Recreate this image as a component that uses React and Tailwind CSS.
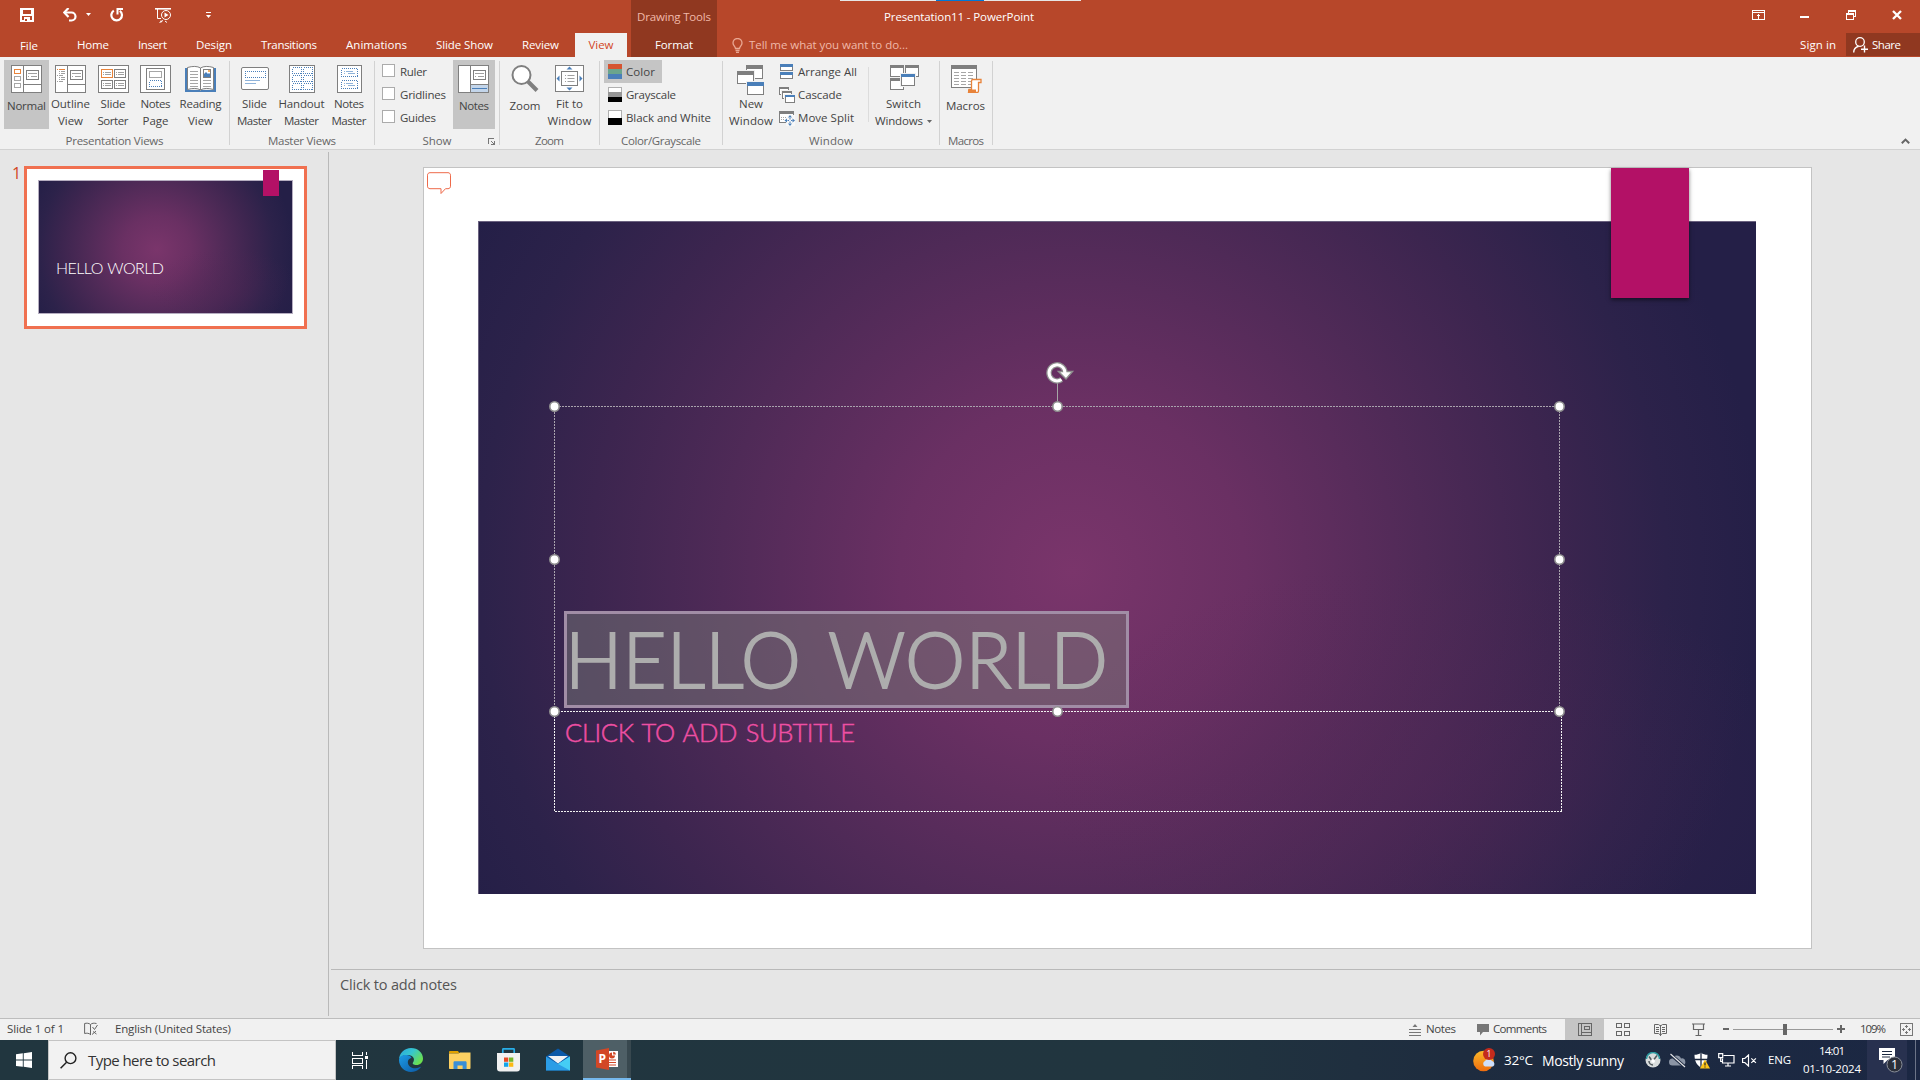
import React, { useLayoutEffect, useRef, useState } from "react";

const UI = "font-['Open_Sans','Noto_Sans',sans-serif]";
const G = "#7f7f7f";
const B = "#4a7fb9";

/* One line of text tracked so that it fills the width w. */
function T({ w, className = "", children }) {
  const ref = useRef(null);
  const [ls, setLs] = useState(0);
  useLayoutEffect(() => {
    const n = children.length;
    const natural = ref.current.getBoundingClientRect().width - ls * n;
    if (n > 1) setLs((w - natural) / (n - 1));
  }, []);
  return (
    <span className={"block shrink-0 whitespace-nowrap " + className} style={{ width: w }}>
      <span ref={ref} className="inline-block" style={{ letterSpacing: ls }}>
        {children}
      </span>
    </span>
  );
}

function Svg({ w, h, children, crisp = true, className = "" }) {
  return (
    <svg
      width={w}
      height={h}
      viewBox={`0 0 ${w} ${h}`}
      fill="none"
      className={"block shrink-0 " + className}
      shapeRendering={crisp ? "crispEdges" : "auto"}
    >
      {children}
    </svg>
  );
}

const R = ({ x, y, w, h, s = G, f = "#fff", ...p }) => (
  <rect x={x + 0.5} y={y + 0.5} width={w - 1} height={h - 1} stroke={s} fill={f} {...p} />
);
const F = ({ x, y, w, h, f = G }) => <rect x={x} y={y} width={w} height={h} fill={f} />;

const MiniSlide = ({ x, y }) => (
  <g>
    <R x={x} y={y} w={13} h={10} />
    <F x={x + 2} y={y + 3} w={9} h={1} f="#a0a0a0" />
    <F x={x + 2} y={y + 6} w={1} h={1} f="#a0a0a0" />
    <F x={x + 5} y={y + 6} w={6} h={1} f="#a0a0a0" />
  </g>
);

const NormalIcon = () => (
  <Svg w={31} h={28}>
    <R x={0} y={0} w={31} h={28} />
    <F x={12} y={0} w={1} h={28} />
    <F x={13} y={19} w={18} h={1} />
    <R x={3} y={4} w={7} h={5} s="#e8833a" />
    <R x={3} y={11} w={7} h={5} s="#a6a6a6" />
    <R x={3} y={18} w={7} h={5} s="#a6a6a6" />
    <MiniSlide x={15} y={5} />
  </Svg>
);
const OutlineIcon = () => (
  <Svg w={31} h={28}>
    <R x={0} y={0} w={31} h={28} />
    <F x={12} y={0} w={1} h={28} />
    <F x={13} y={19} w={18} h={1} />
    <F x={2} y={4} w={1} h={1} f="#e8833a" />
    <F x={4} y={4} w={6} h={1} f="#e8833a" />
    {[6, 8, 10, 12, 14, 16].map((y, i) => (
      <g key={y}>
        <F x={i % 3 === 2 ? 2 : 4} y={y} w={1} h={1} f="#a0a0a0" />
        <F x={i % 3 === 2 ? 4 : 6} y={y} w={4} h={1} f="#a0a0a0" />
      </g>
    ))}
    <MiniSlide x={15} y={5} />
  </Svg>
);
const SorterIcon = () => (
  <Svg w={31} h={28}>
    <R x={0} y={0} w={31} h={28} />
    {[[3, 4], [16, 4], [3, 15], [16, 15]].map(([x, y], i) => (
      <g key={i}>
        <R x={x} y={y} w={12} h={9} s={i ? G : "#e8833a"} />
        <F x={x + 2} y={y + 3} w={1} h={1} f="#a0a0a0" />
        <F x={x + 4} y={y + 3} w={6} h={1} f="#a0a0a0" />
        <F x={x + 2} y={y + 5} w={1} h={1} f="#a0a0a0" />
        <F x={x + 4} y={y + 5} w={6} h={1} f="#a0a0a0" />
      </g>
    ))}
  </Svg>
);
const NotesPageIcon = () => (
  <Svg w={31} h={28}>
    <R x={0} y={0} w={31} h={28} />
    <R x={6} y={3} w={19} h={22} />
    <R x={9} y={6} w={13} h={7} s="#a6a6a6" />
    <R x={9} y={15} w={13} h={7} s={B} strokeDasharray="1 1" />
  </Svg>
);
const ReadingIcon = () => (
  <Svg w={31} h={28} crisp={false}>
    <path d="M0 3h3v22h12l.5 1 .5-1h12V3h3v24H0z" fill={B} />
    <path d="M2.500 2.500c5-1.500 10-1.500 13 .5v22c-3-2-8-2-13-.5z" fill="#fff" stroke={G} />
    <path d="M28.500 2.500c-5-1.500-10-1.500-13 .5v22c3-2 8-2 13-.5z" fill="#fff" stroke={G} />
    <path d="M5 6.500h8M5 9.500h8M5 12.500h8M5 15.500h8M5 18.500h8M18 15.500h8M18 18.500h8M18 21.500h8M5 21.500h8" stroke="#a6a6a6" />
    <rect x="18.500" y="4.500" width="7" height="8" fill="#fff" stroke={G} />
    <path d="M19 12V9l2-2 2 2 1-1 1 1v3z" fill={B} />
    <rect x="23" y="5" width="2" height="2" fill="#f4b266" />
  </Svg>
);
const SlideMasterIcon = () => (
  <Svg w={28} h={28} crisp={false}>
    <rect x=".5" y="2.500" width="27" height="22" rx="1.500" fill="#fff" stroke={G} />
    <path d="M4 6.500h20M4 12.500h20M4.500 6v7M24.500 6v7" stroke={B} strokeDasharray="1 1" />
    <path d="M4 15.500h15M4 18.500h11" stroke="#8fb3d9" />
  </Svg>
);
const HandoutIcon = () => (
  <Svg w={26} h={28}>
    <R x={0} y={0} w={26} h={28} />
    {[2, 10, 18].map((y) =>
      [3, 14].map((x) => (
        <R key={x + "-" + y} x={x} y={y} w={10} h={7} s={B} strokeDasharray="1 1" />
      ))
    )}
  </Svg>
);
const NotesMasterIcon = () => (
  <Svg w={25} h={28}>
    <R x={0} y={0} w={25} h={28} />
    {[3, 15].map((y) => (
      <g key={y}>
        <R x={4} y={y} w={17} h={9} s={B} strokeDasharray="1 1" />
        <F x={7} y={y + 3} w={1} h={1} f="#8fb3d9" />
        <F x={9} y={y + 3} w={7} h={1} f="#8fb3d9" />
        <F x={7} y={y + 5} w={1} h={1} f="#8fb3d9" />
        <F x={11} y={y + 5} w={7} h={1} f="#8fb3d9" />
      </g>
    ))}
  </Svg>
);
const NotesIcon = () => (
  <Svg w={31} h={28}>
    <R x={0} y={0} w={31} h={28} />
    <F x={12} y={0} w={1} h={28} />
    <F x={13} y={19} w={18} h={1} />
    <F x={13} y={20} w={17} h={7} f="#c3d5ea" />
    <F x={14} y={23} w={15} h={1} f={B} />
    <MiniSlide x={15} y={5} />
  </Svg>
);
const ZoomIcon = () => (
  <Svg w={28} h={28} crisp={false}>
    <circle cx="10.500" cy="10" r="9" stroke={G} strokeWidth="2" fill="#fff" />
    <path d="M17 16.500L26 25.500" stroke={G} strokeWidth="4" />
  </Svg>
);
const FitIcon = () => (
  <Svg w={29} h={28} crisp={false}>
    <R x={0} y={0} w={29} h={27} />
    <R x={6} y={6} w={17} h={15} />
    <path d="M10 10.500h1M12.500 10.500h7M10 13.500h1M12.500 13.500h7M10 16.500h1M12.500 16.500h7" stroke="#a0a0a0" />
    <path d="M14.500 1.500l3 3h-6zM14.500 25.500l3-3h-6zM1.500 13.500l3-3v6zM27.500 13.500l-3-3v6z" fill={B} />
  </Svg>
);
const Win = ({ x, y, w, h, c = G, t = 4 }) => (
  <g>
    <rect x={x - 1} y={y - 1} width={w + 2} height={h + 2} fill="#f1f1f1" />
    <R x={x} y={y} w={w} h={h} s={c} />
    <F x={x} y={y} w={w} h={t} f={c} />
  </g>
);
const NewWindowIcon = () => (
  <Svg w={28} h={30}>
    <Win x={9} y={0} w={17} h={14} />
    <Win x={0} y={6} w={17} h={13} />
    <Win x={10} y={17} w={17} h={13} />
    <F x={10} y={17} w={17} h={4} f={B} />
  </Svg>
);
const SwitchIcon = () => (
  <Svg w={30} h={28}>
    <Win x={1} y={0} w={14} h={12} t={3} />
    <Win x={16} y={0} w={14} h={12} t={3} />
    <Win x={1} y={13} w={14} h={12} t={3} />
    <Win x={12} y={9} w={14} h={12} t={3} />
    <F x={12} y={9} w={14} h={3} f={B} />
  </Svg>
);
const MacrosIcon = () => (
  <Svg w={32} h={28} crisp={false}>
    <g shapeRendering="crispEdges">
      <R x={1} y={0} w={26} h={23} />
      <F x={1} y={0} w={26} h={4} />
      {[7, 10, 13, 16, 19].map((y) =>
        [4, 11, 18].map((x) => <F key={x + "_" + y} x={x} y={y} w={5} h={1} f="#a6a6a6" />)
      )}
    </g>
    <path d="M19 24.500h2.500V16c0-1 .5-1.500 1.500-1.500h8v3h-2.500V26c0 1-.5 1.500-1.500 1.500h-8.500z" fill="#fff" stroke="#e8833a" strokeWidth="1.300" />
    <path d="M18 24.500h8v3h-8z" fill="#e8833a" />
  </Svg>
);
const Bars = ({ c }) => (
  <Svg w={14} h={15}>
    <F x={0} y={0} w={14} h={15} f="#b0b0b0" />
    {c.map((f, i) => (
      <F key={i} x={f === "#fff" ? 1 : 0} y={i * (15 / c.length) + (f === "#fff" ? 1 : 0)} w={f === "#fff" ? 12 : 14} h={15 / c.length} f={f} />
    ))}
  </Svg>
);

/* Tall ribbon button: icon above one or two label lines. */
function Big({ icon, lines, widths, width, active, arrow }) {
  return (
    <div className={"flex h-[69px] shrink-0 flex-col items-center pt-[5px] " + (active ? "bg-[#c5c5c5]" : "")} style={{ width }}>
      <div className="flex h-[33px] items-start">{icon}</div>
      {lines.map((l, i) => (
        <div key={l} className={"flex h-4 items-center gap-1 " + (i ? "mt-px" : "")}>
          <T w={widths[i]} className="leading-4">{l}</T>
          {arrow && i === 1 && (
            <Svg w={5} h={3} crisp={false}>
              <path d="M0 0h5L2.500 3z" fill="#666" />
            </Svg>
          )}
        </div>
      ))}
    </div>
  );
}

function Group({ width, label, labelWidth, children, launcher, pl = 0 }) {
  return (
    <div className="flex h-[92px] shrink-0" style={{ width }}>
      <div className="relative flex flex-1 flex-col">
        <div className="mt-[3px] flex h-[73px] items-start" style={{ paddingLeft: pl }}>
          {children}
        </div>
        <div className="flex h-4 justify-center text-[#666]">
          <T w={labelWidth} className="leading-4">{label}</T>
        </div>
        {launcher && (
          <div className="absolute right-[4px] bottom-[4px]">
            <Svg w={7} h={7}>
              <path d="M.5 6V.5H6M3 3l3 3M6.500 3v3.500H3" stroke="#777" />
            </Svg>
          </div>
        )}
      </div>
      <div className="mt-1 h-[84px] w-px bg-[#d2d2d2]" />
    </div>
  );
}

function Small({ icon, label, w, active, gap = 4, box = "" }) {
  return (
    <div className={"flex h-[23px] items-center pl-1 " + (active ? "bg-[#c5c5c5] " : "") + box}>
      {icon}
      <div style={{ width: gap }} />
      <T w={w} className="leading-4">{label}</T>
    </div>
  );
}

const Check = () => <div className="-mt-0.5 size-[13px] border border-[#ababab] bg-white" />;

function Tab({ ml, w, children, className = "text-white" }) {
  return (
    <div className={"flex h-6 shrink-0 items-center " + className} style={{ marginLeft: ml }}>
      <T w={w}>{children}</T>
    </div>
  );
}

function Header() {
  return (
    <div className="flex h-[57px] w-full bg-[#b7472a] text-[11.5px] text-white">
      <div className="flex w-[631px] flex-col">
        <div className="flex h-[33px] items-start pt-[8px] pl-5">
          <Svg w={14} h={14}>
            <path fillRule="evenodd" d="M0 0h14v14H0zM3 2v4h8V2zM2 8v4h2V9h6v3h2V8zM5 11v2h2v-2z" fill="#fff" />
          </Svg>
          <Svg w={15} h={14} crisp={false} className="ml-[29px]">
            <path d="M2 4.500h6.500a4 4 0 010 8H6" stroke="#fff" strokeWidth="2.200" />
            <path d="M5.500 0L1.200 4.500l4.300 4.500" stroke="#fff" strokeWidth="2.200" />
          </Svg>
          <Svg w={5} h={3} crisp={false} className="mt-[5px] ml-[8px]">
            <path d="M0 0h5L2.500 3z" fill="#fff" />
          </Svg>
          <Svg w={14} h={14} crisp={false} className="ml-[19px]">
            <path d="M3.800 2.600A5.300 5.300 0 109.800 2.800" stroke="#fff" strokeWidth="2.200" />
            <path d="M7.500 6.500V1H13" stroke="#fff" strokeWidth="2" />
          </Svg>
          <Svg w={17} h={16} crisp={false} className="ml-[31px]">
            <path d="M0 .8h16" stroke="#fff" strokeWidth="1.600" />
            <path d="M2.500 1v9.500H6M8 12.500L4.500 14.500M6 12.500v2M10 13l2 1.500" stroke="#fff" />
            <circle cx="11" cy="7" r="4.500" stroke="#fff" fill="#b7472a" />
            <path d="M9.500 4.500l4 2.500-4 2.500z" fill="#fff" />
          </Svg>
          <Svg w={5} h={6} crisp={false} className="mt-[4px] ml-[34px]">
            <path d="M0 .5h5" stroke="#fff" />
            <path d="M0 3h5L2.500 6z" fill="#fff" />
          </Svg>
        </div>
        <div className="flex h-6">
          <Tab ml={20} w={18} className="pt-0.5 text-white">File</Tab>
          <Tab ml={39} w={32}>Home</Tab>
          <Tab ml={29} w={29}>Insert</Tab>
          <Tab ml={29} w={36}>Design</Tab>
          <Tab ml={29} w={56}>Transitions</Tab>
          <Tab ml={29} w={61}>Animations</Tab>
          <Tab ml={29} w={57}>Slide Show</Tab>
          <Tab ml={29} w={37}>Review</Tab>
          <div className="ml-4 flex h-6 w-[52px] items-center justify-center bg-[#f1f1f1] text-[#d24726]">
            <T w={25}>View</T>
          </div>
        </div>
      </div>
      <div className="flex w-[86px] flex-col items-center bg-[#903820]">
        <div className="flex h-[33px] items-center text-[#f0b9a9]">
          <T w={74}>Drawing Tools</T>
        </div>
        <div className="flex h-6 items-center">
          <T w={38}>Format</T>
        </div>
      </div>
      <div className="flex flex-1 flex-col">
        <div className="flex h-[33px]">
          <div className="flex w-[364px] flex-col">
            <div className="ml-[123px] flex h-px">
              <div className="h-px w-24 bg-[#e6e6e6]" />
              <div className="h-px w-12 shrink-0 bg-[#0078d7]" />
              <div className="h-px w-[97px] shrink-0 bg-[#e6e6e6]" />
            </div>
            <div className="flex h-8 items-center pl-[167px]">
              <T w={150}>Presentation11 - PowerPoint</T>
            </div>
          </div>
          <div className="flex flex-1 items-start justify-end pt-[10px] pr-[18px]">
            <Svg w={13} h={10}>
              <path d="M.5 .5h12v9H.5zM0 2.500h13M6.500 4.500v5M4.500 6.500l2-2 2 2" stroke="#fff" />
            </Svg>
            <Svg w={9} h={10} className="ml-[35px]">
              <F x={0} y={6} w={9} h={2} f="#fff" />
            </Svg>
            <Svg w={10} h={10} className="ml-[37px]">
              <path d="M2.500 3V.5h7v6H7" stroke="#fff" />
              <F x={2} y={0} w={8} h={2} f="#fff" />
              <path d="M.5 4h7v5.500h-7z" stroke="#fff" />
              <F x={0} y={3} w={8} h={2} f="#fff" />
            </Svg>
            <Svg w={10} h={10} crisp={false} className="ml-[36px]">
              <path d="M1 1l8 8M9 1L1 9" stroke="#fff" strokeWidth="2.300" />
            </Svg>
          </div>
        </div>
        <div className="flex h-6 items-center text-[#f0b9a9]">
          <Svg w={11} h={15} crisp={false} className="ml-[15px]">
            <path d="M3.500 10.500c0-2-2.500-3-2.500-5.500a4.500 4.500 0 019 0c0 2.500-2.500 3.500-2.500 5.500zM3.500 12.500h4M4 14.300h3" stroke="#e9a793" strokeWidth="1.300" />
          </Svg>
          <T w={159} className="ml-[6px]">Tell me what you want to do...</T>
          <div className="flex-1" />
          <T w={36} className="text-white">Sign in</T>
          <div className="mb-px ml-[10px] flex h-[23px] w-[74px] items-center bg-[#903820] pl-[7px] text-white">
            <Svg w={15} h={16} crisp={false}>
              <circle cx="7" cy="5" r="4.300" stroke="#fff" strokeWidth="1.300" />
              <path d="M.7 15.500c0-3.500 2-5.500 5-6.300M11.500 8.500v7M8 12.300h7" stroke="#fff" strokeWidth="1.400" />
            </Svg>
            <T w={29} className="ml-1">Share</T>
          </div>
        </div>
      </div>
    </div>
  );
}

function Ribbon() {
  return (
    <div className="flex h-[93px] w-full border-b border-[#d2d2d2] bg-[#f1f1f1] text-[11.5px] text-[#444]">
      <Group width={230} pl={4} label="Presentation Views" labelWidth={98}>
        <Big active width={45} icon={<NormalIcon />} lines={["Normal"]} widths={[39]} />
        <Big width={43} icon={<OutlineIcon />} lines={["Outline", "View"]} widths={[39, 25]} />
        <Big width={42} icon={<SorterIcon />} lines={["Slide", "Sorter"]} widths={[25, 31]} />
        <Big width={43} icon={<NotesPageIcon />} lines={["Notes", "Page"]} widths={[30, 26]} />
        <Big width={47} icon={<ReadingIcon />} lines={["Reading", "View"]} widths={[42, 25]} />
      </Group>
      <Group width={145} pl={2} label="Master Views" labelWidth={68}>
        <Big width={45} icon={<SlideMasterIcon />} lines={["Slide", "Master"]} widths={[25, 35]} />
        <Big width={49} icon={<HandoutIcon />} lines={["Handout", "Master"]} widths={[46, 35]} />
        <Big width={46} icon={<NotesMasterIcon />} lines={["Notes", "Master"]} widths={[30, 35]} />
      </Group>
      <Group width={125} pl={3} label="Show" labelWidth={29} launcher>
        <div className="flex w-[75px] flex-col">
          <Small icon={<Check />} gap={5} label="Ruler" w={27} />
          <Small icon={<Check />} gap={5} label="Gridlines" w={46} />
          <Small icon={<Check />} gap={5} label="Guides" w={36} />
        </div>
        <Big active width={42} icon={<div className="mr-px"><NotesIcon /></div>} lines={["Notes"]} widths={[30]} />
      </Group>
      <Group width={100} pl={3} label="Zoom" labelWidth={29}>
        <Big width={44} icon={<ZoomIcon />} lines={["Zoom"]} widths={[31]} />
        <Big width={45} icon={<FitIcon />} lines={["Fit to", "Window"]} widths={[27, 44]} />
      </Group>
      <Group width={123} pl={4} label="Color/Grayscale" labelWidth={80}>
        <div className="flex flex-col">
          <Small active box="w-[58px]" icon={<Bars c={["#d65532", "#6ba58d", "#4a7fb9"]} />} label="Color" w={29} />
          <Small icon={<Bars c={["#fff", "#969696", "#000"]} />} label="Grayscale" w={50} />
          <Small icon={<Bars c={["#fff", "#000"]} />} label="Black and White" w={85} />
        </div>
      </Group>
      <Group width={217} pl={4} label="Window" labelWidth={44}>
        <Big width={48} icon={<NewWindowIcon />} lines={["New", "Window"]} widths={[24, 44]} />
        <div className="flex w-[93px] flex-col">
          <Small
            gap={3}
            icon={
              <Svg w={16} h={15}>
                <R x={1} y={0} w={13} h={7} />
                <F x={1} y={0} w={13} h={3} f={B} />
                <R x={1} y={8} w={13} h={7} />
                <F x={1} y={8} w={13} h={3} f={B} />
              </Svg>
            }
            label="Arrange All"
            w={59}
          />
          <Small
            gap={3}
            icon={
              <Svg w={16} h={16}>
                <Win x={0} y={0} w={10} h={8} t={2} />
                <Win x={3} y={4} w={10} h={8} t={2} />
                <Win x={6} y={8} w={10} h={8} t={2} />
                <F x={6} y={8} w={10} h={2} f={B} />
              </Svg>
            }
            label="Cascade"
            w={44}
          />
          <Small
            gap={3}
            icon={
              <Svg w={16} h={16} crisp={false}>
                <R x={0} y={1} w={15} h={12} />
                <F x={0} y={1} w={15} h={3} />
                <path d="M2 7.500h6M2 9.500h4" stroke="#a6a6a6" strokeDasharray="1 1" />
                <path d="M7 13V8l3-3h6v11H7z" fill="#f8f8f8" />
                <path d="M11 5l2 2.500H9zM11 16l2-2.500H9zM5.500 10.500L8 8.500v4zM16 10.500l-2.500-2v4z" fill={B} />
                <path d="M11 8v1.500M11 11.500V13M8.500 10.500H10M12 10.500h1.500" stroke={B} />
              </Svg>
            }
            label="Move Split"
            w={56}
          />
        </div>
        <div className="mt-[7px] h-[55px] w-px bg-[#dcdcdc]" />
        <Big arrow width={69} icon={<SwitchIcon />} lines={["Switch", "Windows"]} widths={[35, 48]} />
      </Group>
      <Group width={53} label="Macros" labelWidth={36}>
        <Big width={51} icon={<MacrosIcon />} lines={["Macros"]} widths={[39]} />
      </Group>
      <div className="flex flex-1 items-end justify-end pr-[10px] pb-[5px]">
        <Svg w={9} h={6} crisp={false}>
          <path d="M.8 5.300L4.500 1.600l3.700 3.700" stroke="#666" strokeWidth="2" />
        </Svg>
      </div>
    </div>
  );
}

const GLOW =
  "bg-[radial-gradient(ellipse_30%_34%_at_74%_84%,rgba(88,40,88,0.32)_0%,rgba(88,40,88,0)_100%),radial-gradient(ellipse_54%_102%_at_46.5%_52%,#7a356b_0%,#6a3063_25%,#4f2a57_51%,#3c254f_70%,#2c224a_86%,#241f47_100%)]";

function Thumbnails() {
  return (
    <div className="flex w-[329px] items-start border-r border-[#b9b9b9] pt-[14px] pl-[12px]">
      <div className="-mt-px w-3 text-[16px] leading-[17px] text-[#d24726]">1</div>
      <div className="relative h-[163px] w-[283px] border-[3px] border-[#f07050] bg-white">
        <div className={"absolute top-[11px] left-[11px] h-[134px] w-[255px] border border-[#b5adc0] bg-[#241f47] " + GLOW} />
        <div className="absolute top-px left-[236px] h-[26px] w-4 bg-[#b31166]" />
        <div className="absolute top-[87px] left-[29px] text-[16px] leading-[24px] font-light text-white [word-spacing:1px] font-['Lato',sans-serif]">
          <T w={108}>HELLO WORLD</T>
        </div>
      </div>
    </div>
  );
}

const HANDLES = [
  [554, 406], [1057, 406], [1559, 406],
  [554, 559], [1559, 559],
  [554, 711], [1057, 711], [1559, 711],
];

function Slide() {
  return (
    <div className="relative mt-[15px] ml-[94px] h-[782px] w-[1389px] border border-[#c3c3c3] bg-white">
      <div className={"absolute top-[53px] left-[54px] h-[673px] w-[1278px] border-t border-l border-[#6b6280] bg-[#241f47] " + GLOW} />
      <div className="absolute top-0 left-[1187px] h-[130px] w-[78px] bg-[#b31166] shadow-[0_2px_4px_rgba(0,0,0,0.5)]" />
      <div className="absolute top-[4px] left-[3px]">
        <Svg w={24} h={23} crisp={false}>
          <path d="M3 .7h18c1.500 0 2.500 1 2.500 2.500v11c0 1.500-1 2.500-2.500 2.500h-2.500L14 21.500v-4.800H3C1.500 16.700.5 15.700.5 14.200v-11C.5 1.700 1.500.7 3 .7z" stroke="#ee6a4a" />
        </Svg>
      </div>
      <div className="absolute top-[443px] left-[140px] h-[97px] w-[565px] border-[3px] border-[#a18da6] bg-[rgba(120,120,120,0.5)]" />
      <div className="absolute top-[442px] left-[141px] text-[76px] leading-[98px] font-light text-[#adadad] [-webkit-text-stroke:1.8px_#adadad] [word-spacing:8px] font-['Lato',sans-serif]">
        <T w={543}>HELLO WORLD</T>
      </div>
      <div className="absolute top-[548px] left-[141px] text-[25.5px] leading-[32px] font-light text-[#ee4fa3] [-webkit-text-stroke:0.5px_#ee4fa3] [word-spacing:2px] font-['Lato',sans-serif]">
        <T w={290}>CLICK TO ADD SUBTITLE</T>
      </div>
      <svg className="absolute inset-0" width="1387" height="780" viewBox="424 168 1387 780" fill="none">
        <path d="M554.500 711V406.500H1559.500V711" stroke="#a9a3ad" strokeDasharray="2 1" shapeRendering="crispEdges" />
        <path d="M554.500 711.500H1561.500V811.500H554.500z" stroke="#f2f2f2" strokeDasharray="2 1" shapeRendering="crispEdges" />
        <path d="M1057.500 382v20" stroke="#a6a6a6" />
        {HANDLES.map(([x, y]) => (
          <circle key={x + "," + y} cx={x + 0.5} cy={y + 0.5} r="4.700" fill="#fff" stroke="#8f8f8f" strokeWidth="1.600" />
        ))}
        <path d="M1061.500 379.500A8 8 0 111065 372.500" stroke="#8f8f8f" strokeWidth="5.500" />
        <path d="M1058.500 371.500h14l-6.500 7.500z" fill="#fff" stroke="#8f8f8f" strokeWidth="1.500" />
        <path d="M1061.500 379.500A8 8 0 111065 373.500" stroke="#fff" strokeWidth="3" />
      </svg>
    </div>
  );
}

function StatusBar() {
  return (
    <div className="flex h-[22px] items-center border-t border-[#bdbdbd] bg-[#f1f1f1] pb-px pl-[7px] text-[11.5px] text-[#444]">
      <T w={57}>Slide 1 of 1</T>
      <Svg w={14} h={14} crisp={false} className="ml-5">
        <path d="M6.500 2.500C5 1 2.500 1 .6 1.500v10c2-.5 4.500-.5 6 1.200M6.500 2.500V13M6.500 2.500C8 1 10 1 12.500 1.500M8.500 5l2 2.500L13.500 3M8 12.500l4-3.500M9 9.500l3.500 2.500" stroke="#666" />
      </Svg>
      <T w={116} className="ml-[17px]">English (United States)</T>
      <div className="flex-1" />
      <Svg w={12} h={13} crisp={false}>
        <path d="M0 6.500h12M0 9.500h12M0 12.500h12" stroke="#777" />
        <path d="M3.500 4L6 1l2.500 3z" fill="#777" />
      </Svg>
      <T w={30} className="ml-[5px]">Notes</T>
      <Svg w={12} h={13} crisp={false} className="ml-[21px]">
        <path d="M0 1h12v8H6l-3 3.500V9H0z" fill="#777" />
      </Svg>
      <T w={54} className="ml-1">Comments</T>
      <div className="-mb-px ml-[18px] flex h-[21px] w-[39px] items-center justify-center bg-[#c5c5c5]">
        <Svg w={14} h={13}>
          <path d="M.5 .5h13v12H.5zM3.500 0v13M4 9.500h10M6.500 3.500h5v3h-5z" stroke="#666" />
        </Svg>
      </div>
      <Svg w={14} h={13} className="ml-3">
        <path d="M.5 .5h5v4h-5zM8.500 .5h5v4h-5zM.5 8.500h5v4h-5zM8.500 8.500h5v4h-5z" stroke="#666" />
      </Svg>
      <Svg w={13} h={13} crisp={false} className="ml-6">
        <path d="M6.500 2v11M.5 1.500h4L6.500 3l2-1.500h4v9h-4L6.500 12l-2-1.500h-4zM2 4.500h3M2 6.500h3M2 8.500h3M8 4.500h3M8 6.500h3M8 8.500h3" stroke="#666" />
      </Svg>
      <Svg w={13} h={13} crisp={false} className="ml-[25px]">
        <path d="M0 1h13M1.500 1.500v5h10v-5M6.500 7v5M3.500 12.500h6" stroke="#666" strokeWidth="1.200" />
      </Svg>
      <div className="ml-[18px] h-0.5 w-1.5 bg-[#666]" />
      <div className="ml-1 flex h-[11px] w-[100px] items-center">
        <div className="h-px w-[50px] bg-[#999]" />
        <div className="h-[11px] w-1 bg-[#666]" />
        <div className="h-px flex-1 bg-[#999]" />
      </div>
      <Svg w={8} h={8} className="ml-1">
        <path d="M0 4h8M4 0v8" stroke="#666" strokeWidth="2" />
      </Svg>
      <T w={26} className="ml-[15px]">109%</T>
      <Svg w={13} h={13} className="mr-[7px] ml-[14px]">
        <path d="M.5 .5h12v12H.5z" stroke="#777" />
        <path d="M6.500 2v3M6.500 8v3M2 6.500h3M8 6.500h3M5 3.500h3M5 9.500h3M3.500 5v3M9.500 5v3" stroke="#777" />
      </Svg>
    </div>
  );
}

const EdgeLogo = () => (
  <svg width="24" height="24" viewBox="0 0 24 24" className="block shrink-0">
    <defs>
      <linearGradient id="edgeTop" x1="0" y1="0" x2="1" y2=".6">
        <stop offset="0" stopColor="#2aa5dd" />
        <stop offset=".5" stopColor="#36c6d0" />
        <stop offset="1" stopColor="#6be04f" />
      </linearGradient>
      <linearGradient id="edgeLow" x1="0" y1="0" x2="1" y2="1">
        <stop offset="0" stopColor="#1c9be6" />
        <stop offset="1" stopColor="#0c59a4" />
      </linearGradient>
    </defs>
    <path d="M0 12C0 5 5.500 0 12 0c7 0 12 5 12 10.500 0 4-3 6.500-6.500 6.500-3 0-4.500-1.200-3.500-2.500 2.500-3.500 0-7.500-5-7.500C4 7 0 9 0 12z" fill="url(#edgeTop)" />
    <path d="M0 12c0-3.500 4-5.500 8-5 3 .3 4.500 2 4.500 3-3 .5-4 3-3.500 5.500.8 3.500 5 5.500 9 4.500 2-.5 3.500-1.500 3.800-1.200.5.500-3.300 5.200-9.800 5.200C5.500 24 0 18.500 0 12z" fill="url(#edgeLow)" />
  </svg>
);

function Taskbar() {
  return (
    <div className="flex h-10 w-full items-center bg-[linear-gradient(90deg,#21363f_0%,#21353f_60%,#1e2c3f_76%,#1b2743_100%)] text-white">
      <Svg w={16} h={16} className="ml-4" crisp={false}>
        <path d="M0 2.300L6.800 1.300v6.300H0zM7.700 1.200L16 0v7.600H7.700zM0 8.500h6.800v6.300L0 13.900zM7.700 8.500H16V16l-8.300-1.200z" fill="#fff" />
      </Svg>
      <div className="ml-4 flex h-10 w-72 items-center border border-[#c4c4c4] bg-[#f2f2f2] pl-[11px] text-[15px] text-[#333]">
        <Svg w={17} h={17} crisp={false}>
          <circle cx="10.500" cy="6.200" r="5.400" stroke="#222" strokeWidth="1.400" />
          <path d="M6.600 10.200L.6 16.200" stroke="#222" strokeWidth="1.500" />
        </Svg>
        <T w={128} className="ml-[11px]">Type here to search</T>
      </div>
      <Svg w={17} h={17} className="ml-[15px]">
        <path d="M1.500 0v3.500H11.500V0M1.500 6.500h10v5h-10zM1.500 17v-3.500h10V17M15.500 0v3M15.500 8v9" stroke="#fff" />
        <F x={14} y={4} w={3} h={3} f="#fff" />
      </Svg>
      <div className="ml-[31px]"><EdgeLogo /></div>
      <Svg w={22} h={19} crisp={false} className="ml-[26px]">
        <path d="M0 1c0-.5.500-1 1-1h8l1.500 2.500H0z" fill="#e0a100" />
        <path d="M0 2.500h9.500L11 1.500h10.500V17c0 .6-.4 1-1 1H1c-.6 0-1-.4-1-1z" fill="#fdd162" />
        <path d="M4.500 11.500c0-.8.600-1.300 1.300-1.300h10.500c.7 0 1.300.5 1.300 1.300V18h-4v-3.500H8.500V18h-4z" fill="#3a8fd6" />
      </Svg>
      <Svg w={23} h={24} crisp={false} className="ml-[26px]">
        <path d="M5.800 6V1.500c0-.4.200-.7.700-.7h10c.5 0 .7.300.7.700V6" stroke="#28aee8" strokeWidth="1.700" />
        <path d="M0 5h23v15.500c0 2-1 3-3 3H3c-2 0-3-1-3-3z" fill="#f1f1f1" />
        <path d="M7 9.500h4.300v4.300H7z" fill="#e74a25" />
        <path d="M12 9.500h4.300v4.300H12z" fill="#76b72a" />
        <path d="M7 14.500h4.300v4.300H7z" fill="#12a4ea" />
        <path d="M12 14.500h4.300v4.300H12z" fill="#fbb913" />
      </Svg>
      <Svg w={24} h={23} crisp={false} className="mb-px ml-[26px]">
        <path d="M0 8.500L12 .5l12 8v14H0z" fill="#0a58a8" />
        <path d="M0 8.500l12 7.500 12-7.500v14H0z" fill="#2b9de6" />
        <path d="M24 8.500v14L12 16z" fill="#45cdf5" />
        <path d="M2 8h20L12 15.500z" fill="#f0f1f4" />
      </Svg>
      <div className="ml-[13px] flex h-10 w-[44px] items-center justify-center border-b-2 border-[#76b9ed] bg-[#4e5f66] pl-1">
        <Svg w={22} h={22} crisp={false}>
          <rect x="10" y="3" width="12" height="16" fill="#fff" />
          <path d="M13 12h7M13 14.500h7M13 17h7" stroke="#d24726" />
          <path d="M16 4.500a3 3 0 103 3h-3z" fill="#d24726" />
          <path d="M17.200 3.800v2.700H20a3 3 0 00-2.800-2.700z" fill="#d24726" />
          <path d="M0 2.500L13 0v22L0 19.500z" fill="#d24726" />
          <text x="2.500" y="15.300" fontSize="12" fontWeight="700" fill="#fff" fontFamily="Open Sans, sans-serif">P</text>
        </Svg>
      </div>
      <div className="h-10 w-1 border-b-2 border-[#76b9ed] bg-[#38484f]" />
      <div className="flex-1" />
      <Svg w={23} h={24} crisp={false}>
        <defs>
          <linearGradient id="sun" x1="0" y1="0" x2="0" y2="1">
            <stop offset="0" stopColor="#fbb829" />
            <stop offset="1" stopColor="#ee6c0e" />
          </linearGradient>
        </defs>
        <circle cx="10.500" cy="13" r="10.300" fill="url(#sun)" />
        <path d="M12 18.500a3 3 0 010-5.500 4 4 0 017 0 3 3 0 011 5.500z" fill="#cfe0fb" />
        <circle cx="16" cy="6" r="6" fill="#c42b1c" />
        <text x="16" y="9" textAnchor="middle" fontSize="8.500" fill="#fff" fontFamily="Open Sans, sans-serif">1</text>
      </Svg>
      <T w={29} className="ml-[8px] text-[13.5px]">32°C</T>
      <T w={82} className="ml-[9px] text-[14px]">Mostly sunny</T>
      <Svg w={16} h={16} crisp={false} className="ml-[21px]">
        <circle cx="8" cy="8" r="7.500" fill="#d8dcdc" />
        <path d="M1.500 7A6.500 6.500 0 0114.500 7" stroke="#2b9aa0" strokeWidth="1.500" />
        <path d="M4 4.500l3.500 5L12 3.500M8 13a4 4 0 01-4-4" stroke="#50585c" strokeWidth="1.500" />
        <circle cx="8" cy="9" r="2" fill="#fff" />
      </Svg>
      <Svg w={17} h={16} crisp={false} className="ml-2">
        <path d="M3.500 13.500a3.500 3.500 0 010-7 4.500 4.500 0 018.500 0 3.500 3.500 0 011.500 7z" fill="#8b95a5" />
        <path d="M1 2l15 13" stroke="#1c2941" strokeWidth="3" />
        <path d="M1.500 2l14.500 13" stroke="#e8e8e8" strokeWidth="1.100" />
      </Svg>
      <Svg w={16} h={17} crisp={false} className="ml-2">
        <path d="M7 .8c2 1.500 4 2 6.500 2C13.500 9 11.500 13 7 15.500 2.500 13 .5 9 .5 2.800c2.500 0 4.500-.5 6.500-2z" fill="#fff" />
        <path d="M7 1v14M.5 7.500h13" stroke="#1c2941" strokeWidth="1.300" />
        <path d="M11 7.500l5 9H6z" fill="#fcc419" />
        <path d="M11 10.500v3M11 14.500v1" stroke="#222" strokeWidth="1.200" />
      </Svg>
      <Svg w={17} h={16} crisp={false} className="ml-2">
        <path d="M5.500 3.500h10.500v7.500H4.500V6.500M7 14h6M10 11v3" stroke="#fff" strokeWidth="1.200" />
        <path d="M.7 1.700h4v4h-4zM2.700 6v3.500h2" stroke="#fff" strokeWidth="1.200" />
      </Svg>
      <Svg w={15} h={13} crisp={false} className="ml-[7px]">
        <path d="M.6 4.500h2.200l3.700-3.500v11L2.800 8.500H.6zM9.300 4.300l4.600 4.600M13.900 4.300L9.300 8.900" stroke="#fff" strokeWidth="1.200" />
      </Svg>
      <T w={23} className="ml-[11px] text-[11.5px]">ENG</T>
      <div className="ml-[11px] flex w-[60px] flex-col items-center text-[11.5px] leading-[18px]">
        <T w={26}>14:01</T>
        <T w={58}>01-10-2024</T>
      </div>
      <div className="ml-[5px] flex h-10 w-10 items-center bg-[#28314f] pl-3">
        <Svg w={26} h={26} crisp={false}>
          <path d="M0 1h16v12H8.500L4.500 17v-4H0z" fill="#fff" />
          <path d="M3 4.500h10M3 7.500h10M3 10h8" stroke="#1c2941" />
          <circle cx="15.500" cy="17.500" r="7.500" fill="#2b2f3a" stroke="#8a8f99" />
          <text x="15.500" y="22" textAnchor="middle" fontSize="12.500" fill="#fff" fontFamily="Open Sans, sans-serif">1</text>
        </Svg>
      </div>
      <div className="mr-1 ml-2 h-10 w-px bg-[#6c7488]" />
    </div>
  );
}

export default function App() {
  return (
    <div className={"flex h-[1080px] w-[1920px] flex-col overflow-hidden bg-[#e6e6e6] " + UI}>
      <Header />
      <Ribbon />
      <div className="flex h-[868px] w-full pt-0.5 pb-0.5">
        <Thumbnails />
        <div className="flex flex-1 flex-col">
          <Slide />
          <div className="mt-5 ml-0.5 flex-1 border-t border-[#b9b9b9] pt-1 pl-[9px] text-[14.5px] text-[#555]">
            <T w={117}>Click to add notes</T>
          </div>
        </div>
      </div>
      <StatusBar />
      <Taskbar />
    </div>
  );
}
